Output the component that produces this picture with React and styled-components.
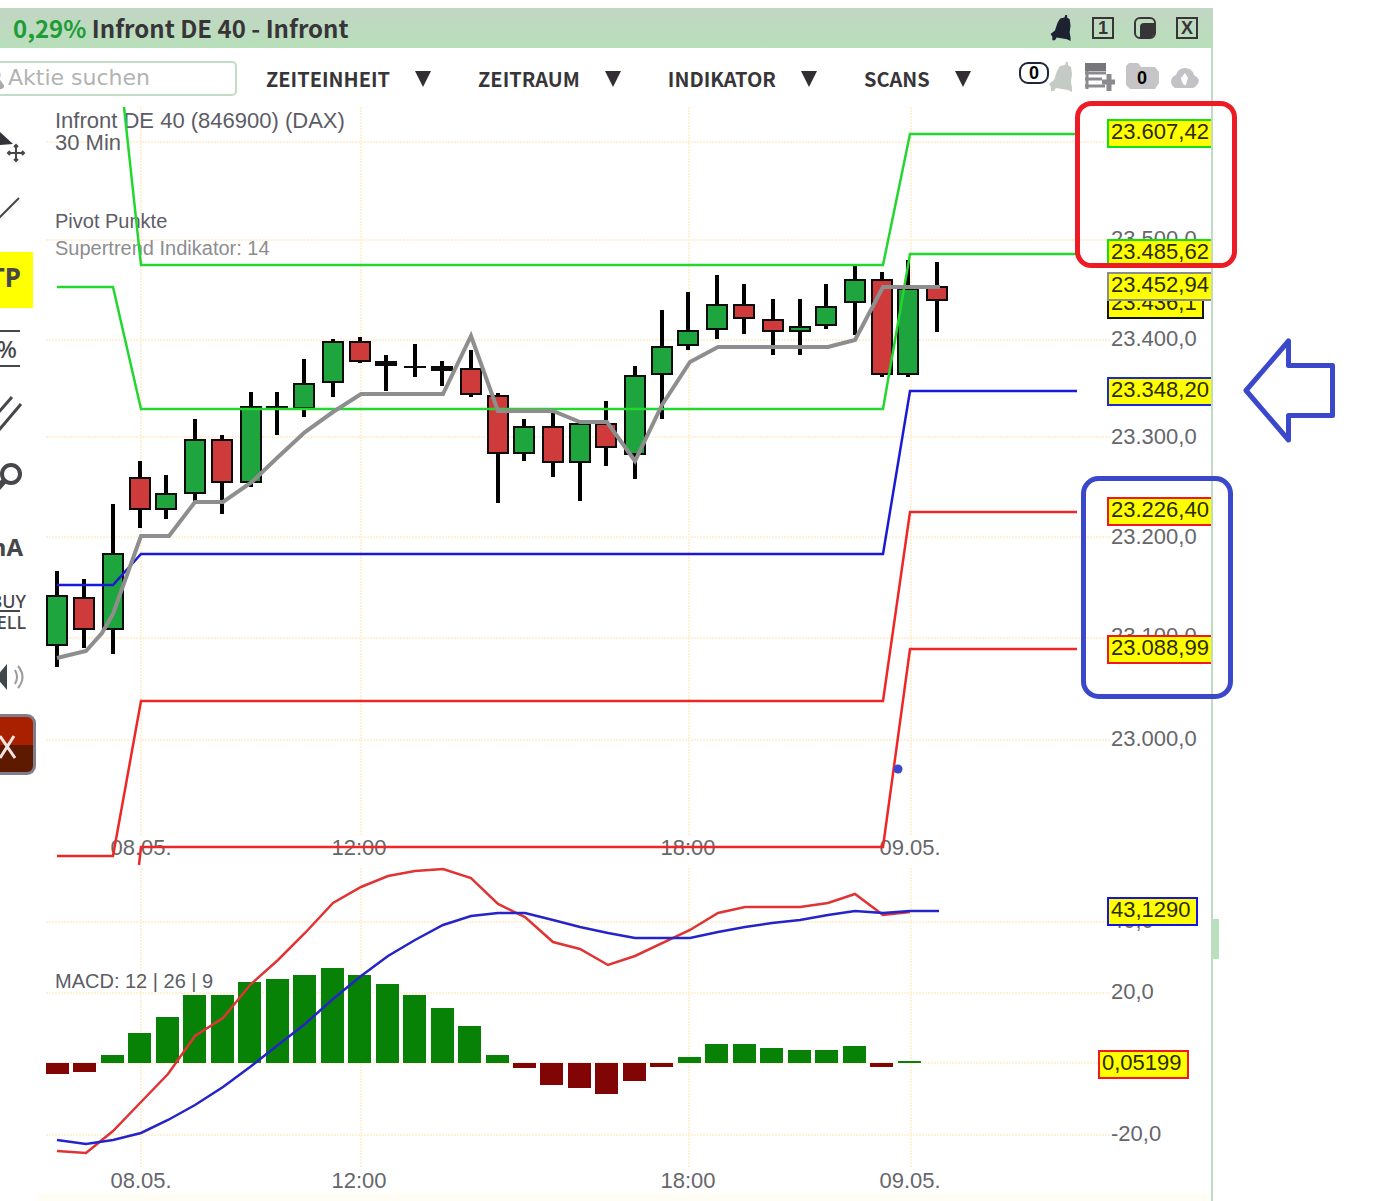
import React from "react";
import styled, { createGlobalStyle } from "styled-components";

const GlobalStyle = createGlobalStyle`
  * { box-sizing: border-box; }
  body { margin: 0; background: #ffffff; }
  button { border: 0; padding: 0; background: none; cursor: pointer; color: inherit; }
  svg { display: block; flex: none; }
`;

const UI_FONT = '"Noto Sans CJK SC", "Noto Sans", sans-serif';
const CHART_FONT = '"Liberation Sans", Arial, sans-serif';

const Page = styled.div`
  display: flex;
  align-items: flex-start;
  padding-top: 8px;
  overflow: hidden;
  font-family: ${UI_FONT};
  color: #383538;
`;

const Window = styled.main`
  flex: 1;
  min-width: 0;
  border-right: 2px solid #bfdcc3;
`;

const Gutter = styled.aside`
  flex: none;
  width: 186px;
  padding-top: 911px;
`;

const Handle = styled.div`
  width: 6px;
  height: 40px;
  background: #b9dfbd;
`;

const TitleBar = styled.header`
  display: flex;
  align-items: center;
  justify-content: space-between;
  height: 40px;
  padding: 0 13px;
  margin-right: -2px;
  background: linear-gradient(#c2d6c4, #b8dfba);
`;

const Title = styled.h1`
  margin: 0;
  font-size: 24px;
  line-height: 40px;
  font-weight: 700;
  white-space: nowrap;
`;

const Change = styled.span`
  color: #1f9c37;
`;

const WindowButtons = styled.div`
  display: flex;
  align-items: center;
  gap: 20px;
  padding-right: 2px;
`;

const WindowButton = styled.button`
  display: flex;
  align-items: center;
  justify-content: center;
  width: 22px;
  height: 22px;
  border: ${(p) => (p.$framed ? "2px solid #383538" : "0")};
  font: 700 18px/18px "Liberation Sans", sans-serif;
`;

const Toolbar = styled.div`
  display: flex;
  align-items: center;
  height: 58px;
  padding-right: 12px;
`;

const Search = styled.label`
  display: flex;
  align-items: center;
  flex: none;
  width: 257px;
  height: 35px;
  margin: 2px 0 0 -20px;
  border: 2px solid #c3dcc6;
  border-radius: 5px;
  overflow: hidden;
`;

const SearchInput = styled.input`
  flex: 1;
  min-width: 0;
  margin-left: 4px;
  padding: 0;
  border: 0;
  outline: 0;
  background: transparent;
  font: 22px/28px "DejaVu Sans", sans-serif;
  &::placeholder { color: #b3b3b3; opacity: 1; }
`;

const Menus = styled.nav`
  display: flex;
  gap: 47px;
  margin: 4px 0 0 29px;
`;

const MenuButton = styled.button`
  display: flex;
  align-items: center;
  gap: 25px;
  font: 700 20px/28px ${UI_FONT};
  white-space: nowrap;
`;

const Actions = styled.div`
  display: flex;
  align-items: center;
  gap: 10px;
  margin-left: auto;
`;

const Action = styled.button`
  display: flex;
  align-items: center;
  height: 36px;
  color: #000000;
  font: 700 18px/20px "Liberation Sans", sans-serif;
`;

const Badge = styled.span`
  width: 30px;
  height: 22px;
  margin-bottom: 8px;
  border: 2px solid #1c2638;
  border-radius: 9px;
  line-height: 18px;
  text-align: center;
`;

const Body = styled.div`
  display: flex;
  align-items: flex-start;
`;

const Tools = styled.nav`
  display: flex;
  flex-direction: column;
  flex: none;
  gap: 10px;
  width: 36px;
  padding-top: 14px;
`;

const Tool = styled.button`
  display: block;
  width: ${(p) => (p.$active ? "33px" : "36px")};
  height: 56px;
  overflow: hidden;
  background: ${(p) => (p.$active ? "#ffff00" : "transparent")};
`;

const CloseTool = styled.button`
  display: flex;
  align-items: center;
  height: 61px;
  border: 3px solid #7d7d8c;
  border-left: 0;
  border-radius: 0 9px 9px 0;
  background: linear-gradient(#a82000 50%, #5e1a00 50%);
`;

const Chart = styled.svg`
  flex: 1;
  min-width: 0;
  height: auto;
  overflow: visible;
  font-family: ${CHART_FONT};
`;

const AxisText = styled.text`
  font-size: 22px;
  fill: ${(p) => (p.$dark ? "#2b2b00" : "#66666b")};
`;

const Note = styled.text`
  font-size: ${(p) => (p.$large ? "22px" : "20px")};
  fill: ${(p) => (p.$soft ? "#8d8d90" : "#5c5c66")};
`;

const ToolText = styled.text`
  font-family: "Noto Sans", sans-serif;
  font-size: ${(p) => p.$size}px;
  font-weight: ${(p) => (p.$light ? 500 : 700)};
  fill: #47474b;
  text-anchor: end;
`;

// [x, high, low, body top, body bottom, rising]
const CANDLES = [
  [57, 571, 667, 595, 646, 1], [84, 579, 648, 597, 630, 0], [113, 504, 654, 553, 630, 1],
  [140, 461, 528, 477, 510, 0], [166, 475, 519, 493, 510, 1], [195, 419, 501, 439, 494, 1],
  [222, 435, 514, 439, 483, 0], [251, 392, 487, 406, 483, 1], [277, 392, 435, 406, 409, 1],
  [304, 359, 417, 383, 409, 1], [333, 339, 397, 341, 383, 1], [360, 337, 363, 341, 362, 0],
  [386, 355, 391, 361, 366, 0], [415, 344, 377, 366, 368, 0], [442, 361, 386, 366, 371, 0],
  [471, 350, 397, 368, 395, 0], [498, 393, 503, 395, 454, 0], [524, 419, 461, 426, 454, 1],
  [553, 412, 477, 426, 463, 0], [580, 423, 501, 423, 463, 1], [606, 401, 466, 423, 448, 0],
  [635, 366, 479, 375, 455, 1], [662, 310, 419, 346, 375, 1], [688, 292, 350, 330, 346, 1],
  [717, 275, 339, 304, 330, 1], [744, 284, 334, 304, 319, 0], [773, 299, 355, 319, 332, 0],
  [800, 299, 355, 326, 332, 1], [826, 284, 329, 306, 326, 1], [855, 266, 335, 279, 303, 1],
  [882, 272, 377, 279, 375, 0], [908, 260, 377, 288, 375, 1], [937, 262, 332, 286, 301, 0],
];

const ZERO = 1063;
const BARS = [
  1074, 1072, 1055, 1033, 1017, 995, 995, 982, 979, 975, 968, 975, 984, 995, 1008, 1026,
  1055, 1068, 1085, 1088, 1094, 1081, 1067, 1057, 1044, 1044, 1048, 1050, 1050, 1046, 1067, 1061,
];

const PIVOTS = [
  ["#22d82e", "124,107 141,265 883,265 910,134 1077,134"],
  ["#22d82e", "57,287 113,287 141,409 883,409 910,254 1077,254"],
  ["#1a1ad6", "57,585 113,585 141,554 883,554 910,391 1077,391"],
  ["#ee2626", "57,856 113,856 141,701 883,701 910,512 1077,512"],
  ["#ee2626", "139,865 141,847 883,847 910,649 1077,649"],
];

const SUPERTREND =
  "57,658 86,651 102,633 113,614 141,536 169,536 195,502 223,502 252,482 277,458 305,432 333,412 361,394 443,394 471,336 498,411 553,411 580,422 607,422 635,461 662,405 690,362 718,347 828,347 855,340 883,287 940,287";

const MACD_LINE =
  "57,1151 86,1153 113,1131 141,1102 168,1074 195,1036 223,1018 250,985 278,960 305,933 333,903 361,887 388,876 415,871 443,869 471,878 498,904 525,917 553,942 580,949 608,965 635,956 690,930 718,913 745,907 800,907 828,903 855,894 883,915 910,912";

const SIGNAL_LINE =
  "57,1140 86,1144 113,1140 141,1133 168,1120 195,1105 223,1087 250,1067 278,1045 305,1024 333,999 361,976 388,956 415,940 443,925 471,916 498,913 525,913 553,920 580,927 608,933 635,938 690,938 718,932 745,927 772,923 800,920 828,915 855,911 883,913 910,911 939,911";

const GRID_ROWS = [142, 240, 340, 437, 537, 638, 740, 922, 993, 1063, 1135];
const GRID_COLUMNS = [141, 361, 689, 911];

const TICKS = [
  ["23.500,0", 246], ["23.400,0", 346], ["23.300,0", 444], ["23.200,0", 544],
  ["23.100,0", 643], ["23.000,0", 746], ["40,0", 928], ["20,0", 999], ["-20,0", 1141],
];

const TIMES = [["08.05.", 141], ["12:00", 359], ["18:00", 688], ["09.05.", 910]];

// [text, x, box top, box width, frame colour]
const TAGS = [
  ["23.607,42", 1108, 120, 120, "#11e011"],
  ["23.485,62", 1108, 240, 120, "#11e011"],
  ["23.436,1", 1108, 291, 95, "#15150c"],
  ["23.452,94", 1108, 273, 120, "#8c8c8c"],
  ["23.348,20", 1108, 378, 120, "#1a2ad6"],
  ["23.226,40", 1108, 498, 120, "#f21818"],
  ["23.088,99", 1108, 636, 120, "#f21818"],
  ["43,1290", 1108, 898, 89, "#1414e6"],
  ["0,05199", 1099, 1051, 89, "#f21818"],
];

const Candle = ({ data: [x, high, low, top, bottom, up] }) => (
  <g>
    <path d={`M${x} ${high}V${low}`} stroke="#000" strokeWidth="4" />
    {bottom - top < 6 ? (
      <rect x={x - 11} y={top} width="22" height={bottom - top} fill="#0c0c0c" />
    ) : (
      <rect x={x - 10} y={top + 1} width="20" height={bottom - top - 2}
        fill={up ? "#1fa53e" : "#cf3b3b"} stroke="#0c0c0c" strokeWidth="2" />
    )}
  </g>
);

const Bell = ({ color, width, height }) => (
  <svg width={width} height={height} viewBox="0 0 24 30" fill={color} aria-hidden="true">
    <path d="M17 0 19 0 19 3 22 5 23 12 22 20 23 26 23 30 19 28 7 26 5 29 2 29 2 25 0 22 5 18 8 9 11 4 16 3Z" />
  </svg>
);

const Menu = ({ children }) => (
  <MenuButton type="button">
    {children}
    <svg width="16" height="16" viewBox="0 0 16 16" fill="#332e33" aria-hidden="true"><path d="M0 0H16L8 16Z" /></svg>
  </MenuButton>
);

const ToolIcon = ({ children }) => (
  <svg width="36" height="56" viewBox="0 0 36 56" fill="none" stroke="#47474b" strokeWidth="2">{children}</svg>
);

const PriceChart = () => (
  <Chart viewBox="36 106 1175 1095" role="img" aria-label="Infront DE 40 chart">
    <defs>
      <clipPath id="plot"><rect x="36" y="106" width="1175" height="1095" /></clipPath>
    </defs>
    <rect x="36" y="1193" width="1175" height="8" fill="#fffdf4" />
    <g stroke="#fff0d6" strokeWidth="2" strokeDasharray="2 1">
      {GRID_ROWS.map((y) => <path key={y} d={`M46 ${y}H1110`} />)}
      {GRID_COLUMNS.map((x) => <path key={x} d={`M${x} 107V835M${x} 868V1168`} />)}
    </g>
    <Note x="55" y="128" $large>Infront DE 40 (846900) (DAX)</Note>
    <Note x="55" y="150" $large>30 Min</Note>
    <Note x="55" y="228">Pivot Punkte</Note>
    <Note x="55" y="255" $soft>Supertrend Indikator: 14</Note>
    <Note x="55" y="988">MACD: 12 | 26 | 9</Note>
    {TICKS.map(([t, y]) => <AxisText key={t} x="1111" y={y}>{t}</AxisText>)}
    {TIMES.map(([t, x]) => (
      <g key={t} textAnchor="middle">
        <AxisText x={x} y="855">{t}</AxisText>
        <AxisText x={x} y="1188">{t}</AxisText>
      </g>
    ))}
    {CANDLES.map((c) => <Candle key={c[0]} data={c} />)}
    <g fill="none" strokeWidth="2.5">
      {PIVOTS.map(([color, points]) => <polyline key={points} points={points} stroke={color} />)}
    </g>
    <polyline points={SUPERTREND} fill="none" stroke="#8e8e8e" strokeWidth="4" />
    {BARS.map((y, i) => (
      <rect key={i} x={Math.round(46 + i * 27.47)} y={Math.min(y, ZERO)} width="23"
        height={Math.abs(y - ZERO)} fill={y < ZERO ? "#078207" : "#820505"} />
    ))}
    <g fill="none" strokeWidth="2.5">
      <polyline points={MACD_LINE} stroke="#e03434" />
      <polyline points={SIGNAL_LINE} stroke="#2424c8" />
    </g>
    <g clipPath="url(#plot)">
      {TAGS.map(([t, x, y, w, color]) => (
        <g key={t}>
          <rect x={x} y={y} width={w} height="27" fill="#ffff00" stroke={color} strokeWidth="2" />
          <AxisText x={x + 3} y={y + 19} $dark>{t}</AxisText>
        </g>
      ))}
    </g>
    <g fill="none" strokeWidth="5">
      <rect x="1077.5" y="103.5" width="157" height="162" rx="14" stroke="#ed1c24" />
      <rect x="1083.5" y="478.5" width="147" height="218" rx="15" stroke="#3b48cc" />
      <path d="M1288.5 341V365.5H1332.5V415.5H1288.5V440L1246 390.5Z" stroke="#3b48cc" strokeLinejoin="round" />
    </g>
    <circle cx="898" cy="769" r="4.5" fill="#3b48cc" />
  </Chart>
);

export default function App() {
  return (
    <Page>
      <GlobalStyle />
      <Window>
        <TitleBar>
          <Title><Change>0,29%</Change> Infront DE 40 - Infront</Title>
          <WindowButtons>
            <WindowButton type="button" aria-label="Alarm"><Bell color="#1d2230" width={22} height={26} /></WindowButton>
            <WindowButton type="button" $framed>1</WindowButton>
            <WindowButton type="button" aria-label="Maximieren">
              <svg width="22" height="22" viewBox="0 0 22 22" fill="none" stroke="#383538" strokeWidth="2">
                <rect x="1" y="1" width="20" height="20" rx="5" />
                <path d="M6 10Q6 6 10 6H21V17L17 21H6Z" fill="#383538" stroke="none" />
              </svg>
            </WindowButton>
            <WindowButton type="button" $framed>X</WindowButton>
          </WindowButtons>
        </TitleBar>
        <Toolbar>
          <Search>
            <svg width="22" height="30" viewBox="0 0 22 30" fill="none" stroke="#a9a9a9" aria-hidden="true">
              <circle cx="10" cy="12" r="7" strokeWidth="3" />
              <path d="M15 17 21 25" strokeWidth="5" />
            </svg>
            <SearchInput type="text" placeholder="Aktie suchen" aria-label="Aktie suchen" />
          </Search>
          <Menus>
            <Menu>ZEITEINHEIT</Menu>
            <Menu>ZEITRAUM</Menu>
            <Menu>INDIKATOR</Menu>
            <Menu>SCANS</Menu>
          </Menus>
          <Actions>
            <Action type="button">
              <Badge>0</Badge>
              <Bell color="#c3cbc4" width={24} height={32} />
            </Action>
            <Action type="button" aria-label="Liste">
              <svg width="32" height="32" viewBox="0 0 32 32" fill="none" stroke="#8b8b8f">
                <path d="M2 6H23" strokeWidth="8" stroke="#77777b" />
                <path d="M2 12H23M2 18H19M2 25H22M4 10V28" strokeWidth="3" />
                <path d="M19 21H32M26 13V30" strokeWidth="5" />
              </svg>
            </Action>
            <Action type="button">
              <svg width="34" height="32" viewBox="0 0 34 32">
                <path d="M1 5 4 2H13L16 6H30L34 11V22L30 28H5L1 24Z" fill="#c6c4c6" />
                <text x="17" y="23" textAnchor="middle" fontSize="18">0</text>
              </svg>
            </Action>
            <Action type="button" aria-label="Upload">
              <svg width="30" height="24" viewBox="0 0 30 24">
                <path fillRule="evenodd" fill="#c4c2c6" d="M6 23Q2 21 2 16 3 11 7 10 9 3 16 3 23 3 25 10 29 12 30 15 29 21 24 23ZM16 8 12 13 13 17 15 20H17L18 16 19 13Z" />
              </svg>
            </Action>
          </Actions>
        </Toolbar>
        <Body>
          <Tools>
            <Tool type="button" aria-label="Auswahl">
              <ToolIcon>
                <path d="M0 12 13 24 0 25Z" fill="#333338" stroke="none" />
                <path d="M16 25V41M8 33H24M14 27 16 25 18 27M14 39 16 41 18 39M10 31 8 33 10 35M22 31 24 33 22 35" />
              </ToolIcon>
            </Tool>
            <Tool type="button" aria-label="Linie"><ToolIcon><path d="M-2 33 19 12" /></ToolIcon></Tool>
            <Tool type="button" $active>
              <ToolIcon><g stroke="none"><ToolText x="21" y="35" $size={26}>TP</ToolText></g></ToolIcon>
            </Tool>
            <Tool type="button">
              <ToolIcon>
                <path d="M0 13H20M0 48H20" />
                <g stroke="none"><ToolText x="17" y="40" $size={24} $light>%</ToolText></g>
              </ToolIcon>
            </Tool>
            <Tool type="button" aria-label="Parallele Linien"><ToolIcon><path d="M-2 29 12 13M-1 46 21 20" strokeWidth="3" /></ToolIcon></Tool>
            <Tool type="button" aria-label="Lupe">
              <ToolIcon><circle cx="11" cy="24" r="9" strokeWidth="4" /><path d="M4 31-4 40" strokeWidth="6" /></ToolIcon>
            </Tool>
            <Tool type="button">
              <ToolIcon><g stroke="none"><ToolText x="23" y="40" $size={24}>nA</ToolText></g></ToolIcon>
            </Tool>
            <Tool type="button">
              <ToolIcon>
                <g stroke="none">
                  <ToolText x="26" y="26" $size={18} $light>BUY</ToolText>
                  <ToolText x="26" y="47" $size={18} $light>SELL</ToolText>
                </g>
                <path d="M0 29H20" />
              </ToolIcon>
            </Tool>
            <Tool type="button" aria-label="Ton">
              <ToolIcon>
                <path d="M-4 29 7 16V42Z" fill="#3f474b" stroke="none" />
                <path d="M15 22Q19 29 15 36M18 18Q27 29 18 40" stroke="#9a9a9e" />
              </ToolIcon>
            </Tool>
            <CloseTool type="button" aria-label="Entfernen">
              <svg width="20" height="30" viewBox="0 0 20 30" stroke="#f3e6e2" strokeWidth="3"><path d="M0 6 15 28M14 6 0 28" /></svg>
            </CloseTool>
          </Tools>
          <PriceChart />
        </Body>
      </Window>
      <Gutter><Handle /></Gutter>
    </Page>
  );
}
